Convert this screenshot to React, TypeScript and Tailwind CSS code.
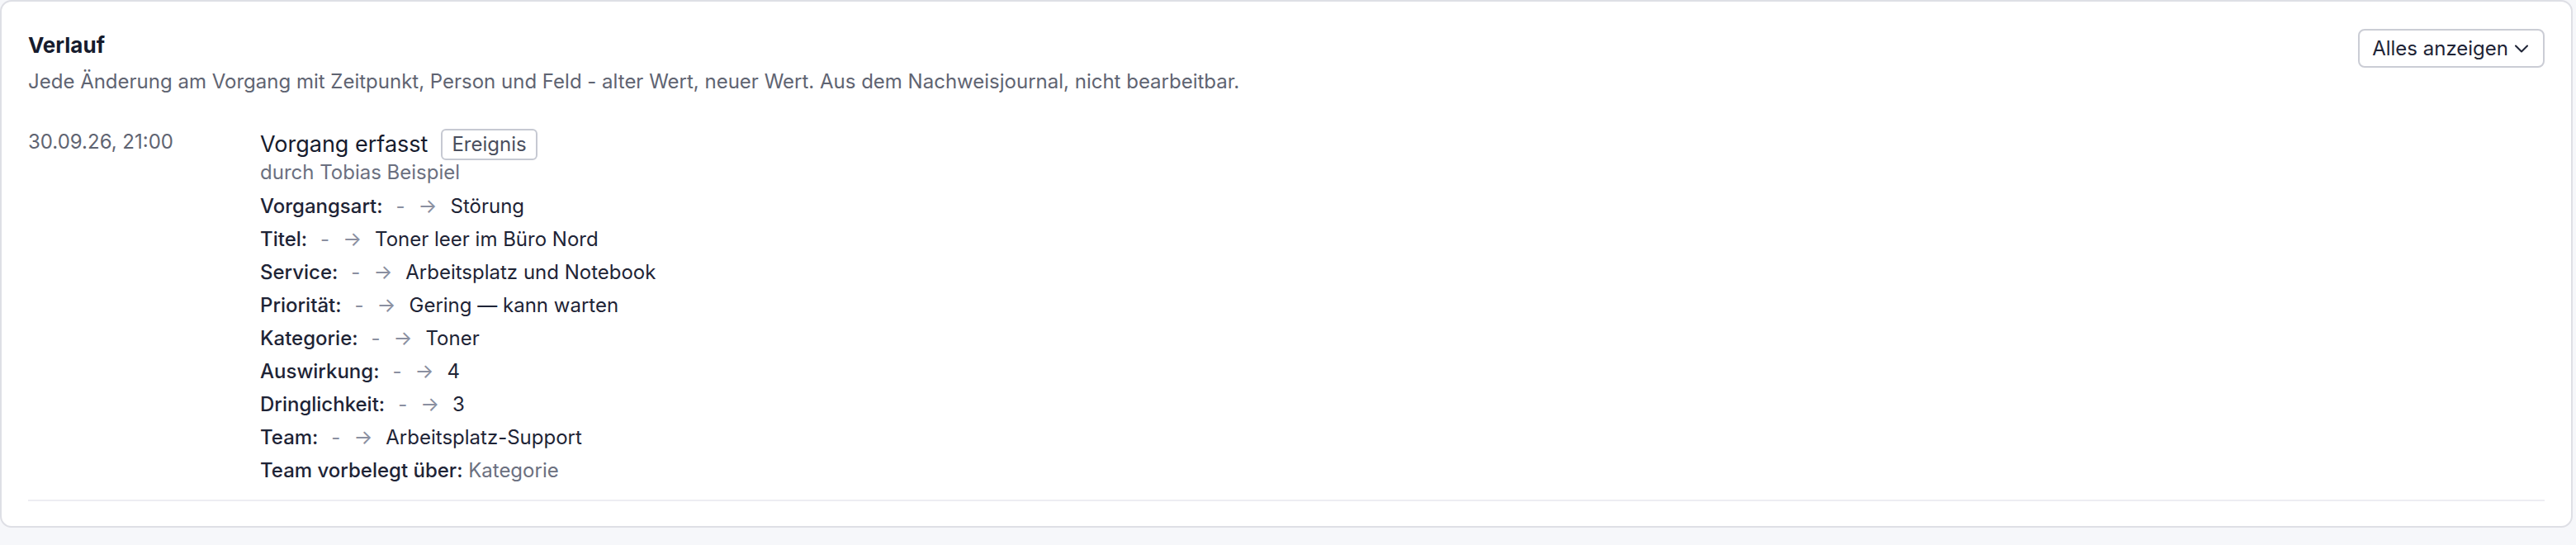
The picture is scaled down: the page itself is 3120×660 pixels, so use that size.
import React from 'react';
import { ChevronDown } from 'lucide-react';

const fields = [
    { label: 'Vorgangsart', value: 'Störung' },
    { label: 'Titel', value: 'Toner leer im Büro Nord' },
    { label: 'Service', value: 'Arbeitsplatz und Notebook' },
    { label: 'Priorität', value: 'Gering — kann warten' },
    { label: 'Kategorie', value: 'Toner' },
    { label: 'Auswirkung', value: '4' },
    { label: 'Dringlichkeit', value: '3' },
    { label: 'Team', value: 'Arbeitsplatz-Support' },
];

export default function App() {
    return (
        <div className="min-h-screen bg-[#f6f7fa] pr-[4px] pb-6 font-['Inter',sans-serif]">
            <section className="rounded-[14px] border-2 border-[#dedfe5] bg-white px-8 pt-[33px] pb-[30px]">
                {/* Kopf */}
                <div className="flex items-start justify-between gap-8">
                    <div>
                        <h2 className="text-[26px] leading-[40px] font-bold text-[#161b2d]">Verlauf</h2>
                        <p className="mt-[6px] text-[24px] leading-[36px] text-[#5f6472]">
                            Jede Änderung am Vorgang mit Zeitpunkt, Person und Feld - alter Wert, neuer Wert. Aus dem Nachweisjournal, nicht bearbeitbar.
                        </p>
                    </div>
                    <button className="flex h-[47px] items-center gap-[2px] rounded-[8px] border-2 border-[#cbcdd5] bg-white pl-[15px] pr-[12px] text-[24px] text-[#1e2436]">
                        Alles anzeigen
                        <ChevronDown size={28} strokeWidth={1.75} />
                    </button>
                </div>

                {/* Eintrag */}
                <div className="mt-[35px] flex border-b-2 border-[#ededf2] pb-[15px]">
                    <div className="w-[281px] shrink-0 pt-[2px] text-[24px] leading-[36px] text-[#5f6472]">30.09.26, 21:00</div>
                    <div className="flex-1 pt-[4px]">
                        <div className="flex h-[38px] items-center gap-4">
                            <span className="text-[27px] leading-[36px] text-[#161b2d]">Vorgang erfasst</span>
                            <span className="flex h-[38px] items-center rounded-[6px] border-2 border-[#c6c9d2] px-[11px] text-[24px] text-[#4a4f5e]">
                                Ereignis
                            </span>
                        </div>
                        <div className="text-[24px] leading-[30px] text-[#6b7080]">durch Tobias Beispiel</div>
                        <div className="mt-[6px] text-[24px] leading-[40px] text-[#1e2436]">
                            {fields.map((f) => (
                                <div key={f.label} className="flex items-center gap-4">
                                    <span className="font-medium">{f.label}:</span>
                                    <span className="text-[#8a8fa0]">-</span>
                                    <span className="text-[#8a8fa0]">→</span>
                                    <span>{f.value}</span>
                                </div>
                            ))}
                            <div>
                                <span className="font-medium">Team vorbelegt über:</span>{' '}
                                <span className="text-[#6b7080]">Kategorie</span>
                            </div>
                        </div>
                    </div>
                </div>
            </section>
        </div>
    );
}
